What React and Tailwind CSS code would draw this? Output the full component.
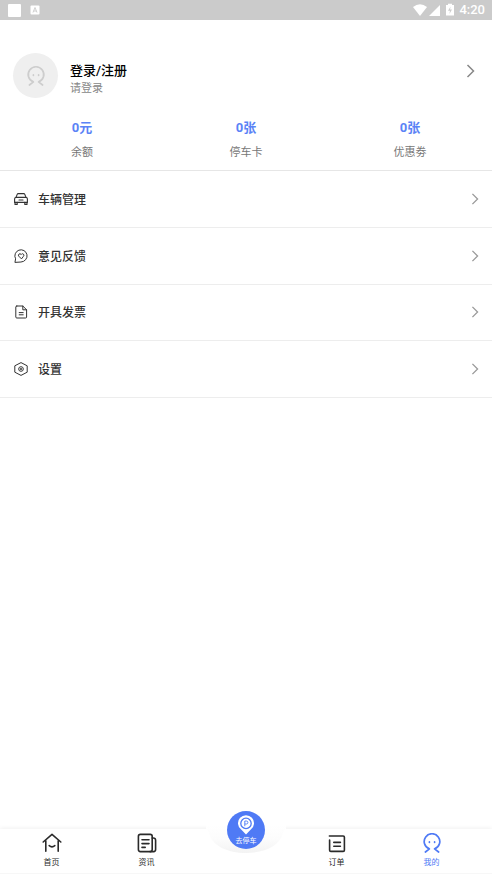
import React from 'react';

const stats = [
  { value: '0元', label: '余额' },
  { value: '0张', label: '停车卡' },
  { value: '0张', label: '优惠劵' },
];

const menu = [
  { label: '车辆管理', Icon: CarIcon },
  { label: '意见反馈', Icon: FeedbackIcon },
  { label: '开具发票', Icon: InvoiceIcon },
  { label: '设置', Icon: SettingsIcon },
];

function CarIcon() {
  return (
    <svg viewBox="0 0 14 14" className="w-3.5 h-3.5" fill="none" stroke="currentColor" strokeWidth="1.1" strokeLinecap="round" strokeLinejoin="round">
      <path d="M2 5.4 L3.2 2.4 Q3.5 1.6 4.3 1.6 H9.7 Q10.5 1.6 10.8 2.4 L12 5.4" />
      <path d="M2 5.4 H12 Q13.4 5.6 13.4 7 V10.4 H0.6 V7 Q0.6 5.6 2 5.4 Z" />
      <path d="M1 10.4 V12.4 H3.2 V10.4 M10.8 10.4 V12.4 H13 V10.4 M5 8 H9" />
    </svg>
  );
}

function FeedbackIcon() {
  return (
    <svg viewBox="0 0 14 14" className="w-3.5 h-3.5" fill="none" stroke="currentColor" strokeWidth="1" strokeLinecap="round" strokeLinejoin="round">
      <path d="M1 13 L1.6 9.8 A6.1 6.1 0 1 1 7.3 13 Z" />
      <path d="M7.2 9.6 L4.8 7.2 A1.4 1.4 0 0 1 7 5.3 L7.2 5.5 L7.4 5.3 A1.4 1.4 0 0 1 9.6 7.2 Z" />
    </svg>
  );
}

function InvoiceIcon() {
  return (
    <svg viewBox="0 0 14 14" className="w-3.5 h-3.5" fill="none" stroke="currentColor" strokeWidth="1" strokeLinecap="round" strokeLinejoin="round">
      <path d="M2.8 1 H8.8 L12.6 4.8 V12 Q12.6 13 11.6 13 H2.8 Q1.8 13 1.8 12 V2 Q1.8 1 2.8 1 Z" />
      <path d="M8.8 1 V4.8 H12.6 M5.2 7.6 H9.2 M5.2 9.8 H9.2" />
    </svg>
  );
}

function SettingsIcon() {
  return (
    <svg viewBox="0 0 14 14" className="w-3.5 h-3.5" fill="none" stroke="currentColor" strokeWidth="1" strokeLinejoin="round">
      <path d="M7 0.6 L13.2 3.8 V10.2 L7 13.4 L0.8 10.2 V3.8 Z" />
      <circle cx="7" cy="7" r="2.3" />
      <circle cx="7" cy="7" r="0.6" fill="currentColor" />
    </svg>
  );
}

function PersonIcon({ className }) {
  return (
    <svg viewBox="0 0 20 20" className={className} fill="none" stroke="currentColor" strokeWidth="1.7" strokeLinecap="round" strokeLinejoin="round">
      <path d="M3.4 19 L7.4 15.9 A7.8 7.8 0 1 1 12.6 15.9 L16.6 19" />
      <path d="M7.4 8.9 V9.3 M12.6 8.9 V9.3" />
    </svg>
  );
}

function HomeIcon() {
  return (
    <svg viewBox="0 0 20 20" className="w-5 h-5" fill="none" stroke="currentColor" strokeWidth="1.6" strokeLinecap="round" strokeLinejoin="round">
      <path d="M1.2 9 L10 1.4 L18.8 9 M3.8 7.6 V18.2 M16.2 7.6 V18.2" />
      <path d="M7.2 12.6 Q10 15 12.8 12.6" />
    </svg>
  );
}

function NewsIcon() {
  return (
    <svg viewBox="0 0 20 20" className="w-5 h-5" fill="none" stroke="currentColor" strokeWidth="1.6" strokeLinecap="round" strokeLinejoin="round">
      <rect x="1.4" y="1.4" width="13.8" height="17.2" rx="2" />
      <path d="M15.2 5 H16.2 Q18.6 5 18.6 7.2 V16.6 Q18.6 18.6 16.6 18.6 H13" />
      <path d="M5 6.8 H12 M5 10.6 H12 M5 14.4 H8.2" />
    </svg>
  );
}

function OrderIcon() {
  return (
    <svg viewBox="0 0 20 20" className="w-5 h-5" fill="none" stroke="currentColor" strokeWidth="1.6" strokeLinecap="round" strokeLinejoin="round">
      <path d="M2.4 3 H16.2 Q17.4 3 17.4 4.2 V17.2 Q17.4 18.4 16.2 18.4 H3.8 Q2.6 18.4 2.6 17.2 V7" />
      <path d="M6.8 9.4 H13.4 M6.8 13.2 H13.4" />
    </svg>
  );
}

function Chevron({ className }) {
  return (
    <svg viewBox="0 0 8 14" className={className} fill="none" stroke="currentColor" strokeWidth="1.5">
      <path d="M1 1 L7 7 L1 13" />
    </svg>
  );
}

function StatusBar() {
  return (
    <div className="flex items-center justify-between h-5 pl-2 pr-[7px] bg-[#cbcbcb] text-white">
      <div className="flex items-center gap-2">
        <span className="w-[13px] h-[13px] bg-white rounded-[1px]" />
        <svg viewBox="0 0 10 10" className="w-[10px] h-[10px] ml-px">
          <rect x="0.5" y="0.5" width="9" height="9" rx="1" fill="#fff" />
          <path d="M3 7.5 L5 2.5 L7 7.5 M3.7 6 H6.3" fill="none" stroke="#cbcbcb" strokeWidth="0.9" />
        </svg>
      </div>
      <div className="flex items-center">
        <svg viewBox="0 0 42 14" className="w-[42px] h-[14px]" fill="currentColor">
          <path d="M0 4 Q7 -1.4 14 4 L7 13 Z" />
          <path d="M27 2 V13 H16 Z" />
          <path d="M33 2 H35 V0.8 H39 V2 H41 V12.6 H33 Z" />
          <path d="M37.6 3.6 L35 7.8 H37 L36.4 11 L39 6.6 H37 Z" fill="#cbcbcb" />
        </svg>
        <span className="ml-1 font-[Roboto,sans-serif] text-[13px] leading-5 font-medium">4:20</span>
      </div>
    </div>
  );
}

function Tab({ label, active, children }) {
  return (
    <a
      href="#"
      className={active ? 'flex flex-col items-center gap-1 pt-1 text-[#4f7af5]' : 'flex flex-col items-center gap-1 pt-1 text-[#2a2a2a]'}
    >
      {children}
      <span className="text-[8px] leading-3">{label}</span>
    </a>
  );
}

function TabBar() {
  return (
    <nav className="relative mt-auto h-[45px] grid grid-cols-5 pl-1 pr-[13px] bg-white border-b border-[#f7f7f7] shadow-[0_-1px_4px_rgba(0,0,0,0.06)]">
      {/* Cradle under the parking button */}
      <svg viewBox="0 0 80 30" className="absolute left-1/2 -top-1 -ml-10 w-20 h-[30px]">
        <defs>
          <linearGradient id="cradle" x1="0" y1="0" x2="0" y2="1">
            <stop offset="0" stopColor="#ffffff" />
            <stop offset="0.5" stopColor="#fcfcfc" />
            <stop offset="1" stopColor="#f3f3f3" />
          </linearGradient>
        </defs>
        <path d="M0 0 H80 V4 Q78 4 77 8 C74 21 58 28 40 28 C22 28 6 21 3 8 Q2 4 0 4 Z" fill="url(#cradle)" />
      </svg>
      <Tab label="首页"><HomeIcon /></Tab>
      <Tab label="资讯"><NewsIcon /></Tab>
      <span />
      <Tab label="订单"><OrderIcon /></Tab>
      <Tab label="我的" active><PersonIcon className="w-5 h-5" /></Tab>
      <button
        type="button"
        className="absolute left-1/2 -top-[18px] -ml-[19px] w-[38px] h-[38px] rounded-full bg-[#4f7af5] text-white flex flex-col items-center pt-1"
      >
        <svg viewBox="0 0 18 20" className="w-[18px] h-5 shrink-0">
          <path d="M9 19.4 L4.2 14.6 A8 8 0 1 1 13.8 14.6 Z" fill="#fff" />
          <circle cx="9" cy="8.4" r="5.2" fill="none" stroke="#4f7af5" strokeWidth="1.3" />
          <path d="M7.8 11.2 V6 H9.4 A1.5 1.5 0 0 1 9.4 9 H7.8" fill="none" stroke="#4f7af5" strokeWidth="0.9" />
        </svg>
        <span className="text-[7px] leading-3 whitespace-nowrap">去停车</span>
      </button>
    </nav>
  );
}

export default function App() {
  return (
    <div className="min-h-screen flex flex-col bg-white font-[Roboto,'Noto_Sans_CJK_SC',sans-serif]">
      <StatusBar />

      {/* Profile */}
      <a href="#" className="flex items-center mt-[33px] pl-[13px] pr-[17px]">
        <span className="w-[45px] h-[45px] rounded-full bg-[#efefef] text-[#cdcdcd] flex items-center justify-center">
          <PersonIcon className="w-5 h-[22px]" />
        </span>
        <span className="ml-3 pt-2 flex flex-col">
          <span className="text-[13px] leading-[18px] font-medium text-black">登录/注册</span>
          <span className="text-[11px] leading-[18px] text-[#888]">请登录</span>
        </span>
        <Chevron className="ml-auto mb-[10px] w-[9px] h-[14px] text-[#888]" />
      </a>

      <div className="grid grid-cols-3 h-[73px] pt-5 border-b border-[#e6e6e6] text-center">
        {stats.map((s) => (
          <div key={s.label}>
            <div className="text-[13px] leading-5 font-bold text-[#5b83f6]">{s.value}</div>
            <div className="mt-1 text-[11px] leading-[22px] text-[#777]">{s.label}</div>
          </div>
        ))}
      </div>

      <ul className="grid auto-rows-fr h-[227px]">
        {menu.map(({ label, Icon }) => (
          <li key={label} className="border-b border-[#ededed]">
            <a href="#" className="flex items-center h-full pl-3.5 pr-[13px] text-[#333]">
              <Icon />
              <span className="ml-[10px] pt-[2px] text-[12px] leading-5 font-medium">{label}</span>
              <Chevron className="ml-auto w-2 h-3 text-[#999]" />
            </a>
          </li>
        ))}
      </ul>

      <TabBar />
    </div>
  );
}
